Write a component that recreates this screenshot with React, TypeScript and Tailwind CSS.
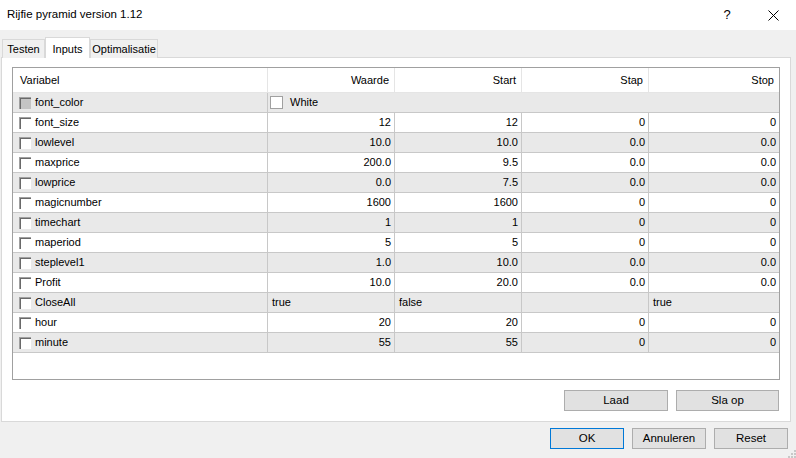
import React from "react";

type Row = {
  name: string;
  values: string[];
  left?: boolean;
};

const rows: Row[] = [
  { name: "font_size", values: ["12", "12", "0", "0"] },
  { name: "lowlevel", values: ["10.0", "10.0", "0.0", "0.0"] },
  { name: "maxprice", values: ["200.0", "9.5", "0.0", "0.0"] },
  { name: "lowprice", values: ["0.0", "7.5", "0.0", "0.0"] },
  { name: "magicnumber", values: ["1600", "1600", "0", "0"] },
  { name: "timechart", values: ["1", "1", "0", "0"] },
  { name: "maperiod", values: ["5", "5", "0", "0"] },
  { name: "steplevel1", values: ["1.0", "10.0", "0.0", "0.0"] },
  { name: "Profit", values: ["10.0", "20.0", "0.0", "0.0"] },
  { name: "CloseAll", values: ["true", "false", "", "true"], left: true },
  { name: "hour", values: ["20", "20", "0", "0"] },
  { name: "minute", values: ["55", "55", "0", "0"] },
];

const cols = "grid grid-cols-[255px_127px_127px_127px_1fr]";

function CheckBox({ disabled }: { disabled?: boolean }) {
  return (
    <div className="h-[12px] w-[12px] border-t border-l border-[#a0a0a0] border-r-white border-b-white">
      <div
        className={
          "h-full w-full border-t border-l border-[#696969] " +
          (disabled ? "bg-[#c4c4c4]" : "bg-white")
        }
      />
    </div>
  );
}

function NameCell({ name, disabled }: { name: string; disabled?: boolean }) {
  return (
    <div className="flex items-center gap-[4px] border-r border-[#c8c8c8] pl-[6px]">
      <CheckBox disabled={disabled} />
      <span>{name}</span>
    </div>
  );
}

function Btn({ label, primary, w }: { label: string; primary?: boolean; w: string }) {
  return (
    <div
      className={
        "flex h-[21px] items-center justify-center border bg-[#e1e1e1] text-[11.5px] " +
        w +
        (primary ? " border-[#0078d7]" : " border-[#adadad]")
      }
    >
      {label}
    </div>
  );
}

export default function App() {
  return (
    <div
      className="flex h-[458px] w-[796px] flex-col bg-[#f0f0f0] text-black"
      style={{ fontFamily: '"Liberation Sans", Arial, sans-serif' }}
    >
      {/* title bar */}
      <div className="flex h-[30px] items-center bg-white pl-[7px]">
        <span className="text-[11.5px]">Rijfie pyramid version 1.12</span>
        <div className="ml-auto flex items-center">
          <span className="w-[46px] text-center text-[13px]">?</span>
          <div className="flex w-[46px] justify-center">
            <svg width="11" height="11" viewBox="0 0 11 11">
              <path d="M0.5 0.5 L10.5 10.5 M10.5 0.5 L0.5 10.5" stroke="#000" strokeWidth="1" />
            </svg>
          </div>
        </div>
      </div>

      {/* tabs */}
      <div className="relative z-10 mt-[7px] -mb-px flex h-[21px] items-end pl-[2px] text-[11px]">
        <div className="flex h-[19px] w-[43px] items-center justify-center border border-b-0 border-[#d9d9d9] bg-[#f0f0f0]">
          Testen
        </div>
        <div className="flex h-[21px] w-[45px] items-start justify-center border border-b-0 border-[#d9d9d9] bg-white pt-[3px]">
          Inputs
        </div>
        <div className="flex h-[19px] w-[68px] items-center justify-center border border-b-0 border-[#d9d9d9] bg-[#f0f0f0]">
          Optimalisatie
        </div>
      </div>

      {/* panel */}
      <div className="ml-[1px] flex h-[365px] w-[790px] flex-col border border-[#d9d9d9] bg-white pl-[10px] pr-[10px] pt-[9px]">
        <div className="flex h-[313px] w-[768px] flex-col border border-[#a0a0a0] bg-white text-[11px]">
          <div className={cols + " h-[25px] border-b border-[#e5e5e5]"}>
            <div className="flex items-center border-r border-[#e5e5e5] pl-[7px]">Variabel</div>
            <div className="flex items-center justify-end border-r border-[#e5e5e5] pr-[5px]">Waarde</div>
            <div className="flex items-center justify-end border-r border-[#e5e5e5] pr-[5px]">Start</div>
            <div className="flex items-center justify-end border-r border-[#e5e5e5] pr-[5px]">Stap</div>
            <div className="flex items-center justify-end pr-[5px]">Stop</div>
          </div>

          <div className="grid h-[20px] grid-cols-[255px_1fr] border-b border-[#c8c8c8] bg-[#e9e9e9]">
            <NameCell name="font_color" disabled />
            <div className="flex items-center gap-[7px] pl-[2px]">
              <div className="h-[13px] w-[13px] border border-[#a0a0a0] bg-white" />
              <span>White</span>
            </div>
          </div>

          {rows.map((r, i) => (
            <div
              key={r.name}
              className={
                cols +
                " h-[20px] border-b border-[#c8c8c8] " +
                (i % 2 === 1 ? "bg-[#e9e9e9]" : "bg-white")
              }
            >
              <NameCell name={r.name} />
              {r.values.map((v, j) => (
                <div
                  key={j}
                  className={
                    "flex items-center " +
                    (j < 3 ? "border-r border-[#c8c8c8] " : "") +
                    (r.left ? "pl-[4px]" : "justify-end pr-[3px]")
                  }
                >
                  {v}
                </div>
              ))}
            </div>
          ))}
        </div>

        <div className="mt-[10px] flex justify-end gap-[8px] pr-px">
          <Btn label="Laad" w="w-[104px]" />
          <Btn label="Sla op" w="w-[103px]" />
        </div>
      </div>

      {/* footer buttons */}
      <div className="relative mt-[6px] flex justify-end gap-[8px] pr-[8px]">
        <Btn label="OK" primary w="w-[74px]" />
        <Btn label="Annuleren" w="w-[74px]" />
        <Btn label="Reset" w="w-[74px]" />
        <svg className="absolute right-0 top-[22px]" width="8" height="8" viewBox="0 0 8 8">
          <rect x="6" y="0" width="2" height="2" fill="#c8c8c8" />
          <rect x="3" y="3" width="2" height="2" fill="#c8c8c8" />
          <rect x="6" y="3" width="2" height="2" fill="#c8c8c8" />
          <rect x="0" y="6" width="2" height="2" fill="#c8c8c8" />
          <rect x="3" y="6" width="2" height="2" fill="#c8c8c8" />
          <rect x="6" y="6" width="2" height="2" fill="#c8c8c8" />
        </svg>
      </div>
    </div>
  );
}
